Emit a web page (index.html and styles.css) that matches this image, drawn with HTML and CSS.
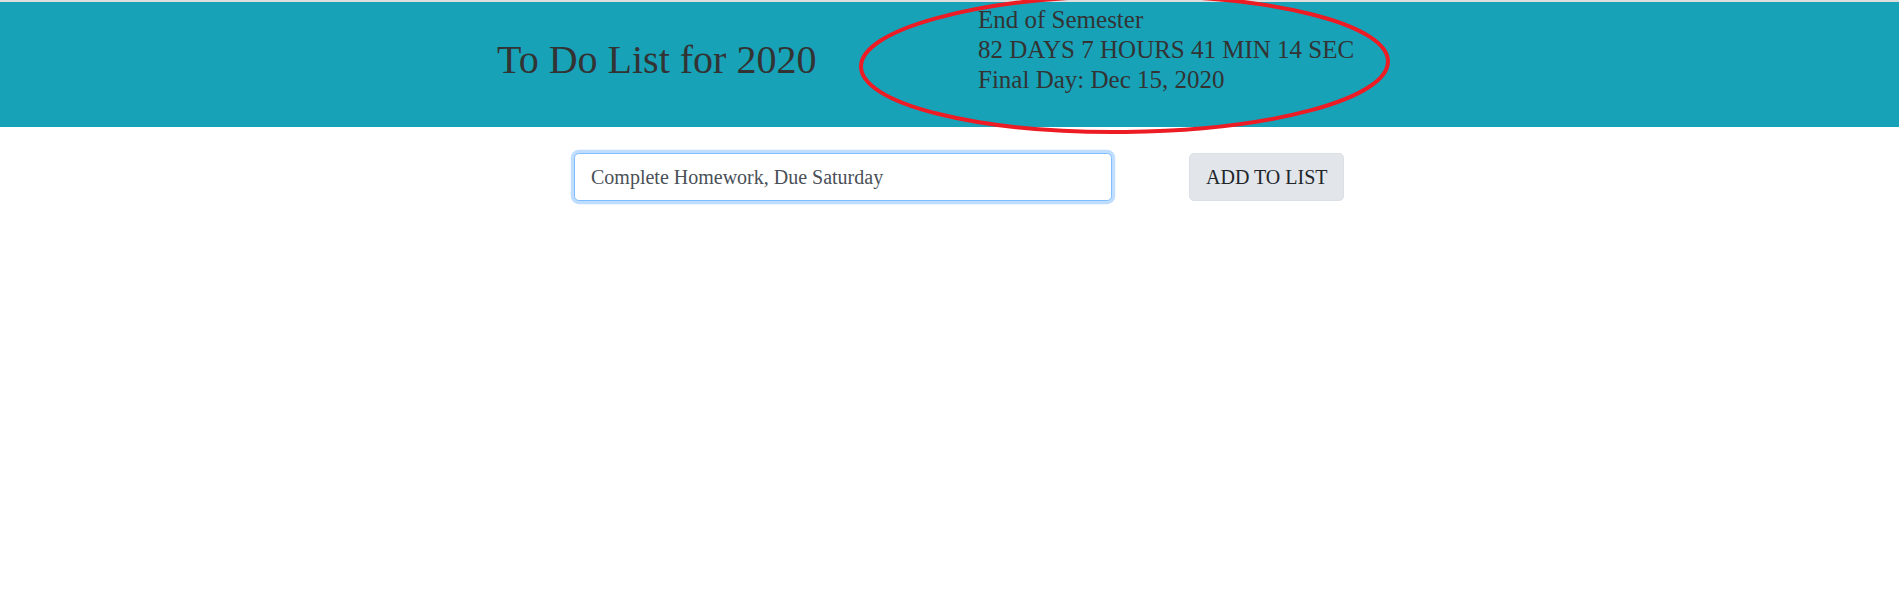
FILE: index.html
```html
<!DOCTYPE html>
<html lang="en">
<head>
<meta charset="utf-8">
<title>To Do List for 2020</title>
<link rel="stylesheet" href="styles.css">
</head>
<body>
<div class="topline"></div>
<header class="header">
  <h1 class="title">To Do List for 2020</h1>
  <div class="countdown">
    <div class="line">End of Semester</div>
    <div class="line">82 DAYS 7 HOURS 41 MIN 14 SEC</div>
    <div class="line">Final Day: Dec 15, 2020</div>
  </div>
</header>
<main class="entry">
  <input class="task-input" type="text" value="Complete Homework, Due Saturday">
  <button class="add-btn" type="button">ADD TO LIST</button>
</main>
<svg class="annotation" width="1899" height="150" viewBox="0 0 1899 150" xmlns="http://www.w3.org/2000/svg">
  <ellipse cx="1124.5" cy="64" rx="263.5" ry="68" fill="none" stroke="#ed1c24" stroke-width="4" transform="rotate(-0.6 1124.5 64)"/>
</svg>
</body>
</html>
```
FILE: styles.css
```css
html, body {
  margin: 0;
  padding: 0;
  background: #ffffff;
}
body {
  font-family: "Liberation Serif", "Times New Roman", serif;
  position: relative;
  min-height: 604px;
}
.topline {
  height: 2px;
  background: #dedede;
}
.header {
  background: #17a2b8;
  height: 125px;
  display: flex;
  align-items: flex-start;
  padding-left: 497px;
  box-sizing: border-box;
  color: #333333;
}
.title {
  margin: 34px 0 0 0;
  font-size: 40px;
  font-weight: 400;
  line-height: 1.2;
  width: 481px;
}
.countdown {
  margin-top: 3px;
  font-size: 25px;
  line-height: 30px;
}
.entry {
  display: flex;
  align-items: flex-start;
  padding: 26px 0 0 574px;
  gap: 77px;
}
.task-input {
  box-sizing: border-box;
  width: 538px;
  height: 48px;
  padding: 8px 16px;
  font-family: "Liberation Serif", "Times New Roman", serif;
  font-size: 20px;
  color: #495057;
  background: #ffffff;
  border: 1px solid #80bdff;
  border-radius: 4.8px;
  box-shadow: 0 0 0 3.2px rgba(0, 123, 255, 0.25);
  outline: none;
}
.add-btn {
  box-sizing: border-box;
  height: 48px;
  padding: 8px 16px;
  white-space: nowrap;
  font-family: "Liberation Serif", "Times New Roman", serif;
  font-size: 20px;
  line-height: 1.5;
  color: #212529;
  background: #e2e6ea;
  border: 1px solid #dae0e5;
  border-radius: 4.8px;
}
.annotation {
  position: absolute;
  left: 0;
  top: 0;
  pointer-events: none;
}
```
